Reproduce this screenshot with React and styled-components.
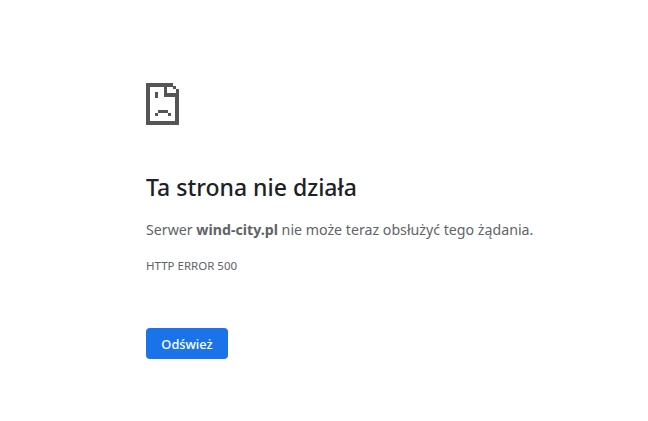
import React from "react";
import styled, { createGlobalStyle } from "styled-components";

const GlobalStyle = createGlobalStyle`
    html, body {
        margin: 0;
        padding: 0;
        background: #fff;
    }
`;

const Page = styled.div`
    width: 648px;
    height: 421px;
    overflow: hidden;
    box-sizing: border-box;
    padding: 83px 0 0 146px;
    display: flex;
    flex-direction: column;
    align-items: flex-start;
    font-family: "Noto Sans", "Liberation Sans", sans-serif;
    color: #5f6368;
`;

const Icon = styled.svg`
    display: block;
    width: 33px;
    height: 42px;
    shape-rendering: crispEdges;
`;

const Title = styled.h1`
    margin: 47px 0 0;
    font-size: 23px;
    line-height: 31px;
    font-weight: 500;
    color: #202124;
`;

const Message = styled.p`
    margin: 15px 0 0;
    font-size: 14.2px;
    line-height: 23px;
    strong {
        font-weight: 700;
    }
`;

const Code = styled.div`
    margin-top: 17px;
    font-size: 11.5px;
    line-height: 16px;
`;

const ReloadButton = styled.button`
    margin-top: 54px;
    width: 82px;
    height: 31px;
    padding: 0;
    border: 0;
    border-radius: 4px;
    background: #1a73e8;
    color: #fff;
    font-family: inherit;
    font-size: 12.8px;
    font-weight: 500;
`;

export default function App() {
    return (
        <>
            <GlobalStyle />
            <Page>
                <Icon viewBox="0 0 33 42" fill="#555555">
                    <path d="M0 0h27v4H4v34h25V10h4v32H0z" />
                    <path d="M18 4h3v6h12v4H18z" />
                    <path d="M27 3h3v3h-3zM30 6h3v4h-3z" />
                    <path d="M9 9h3v6H9z" />
                    <path d="M12 27h10v3H12zM9 30h3v3H9zM22 30h3v3h-3z" />
                </Icon>
                <Title>Ta strona nie działa</Title>
                <Message>
                    Serwer <strong>wind-city.pl</strong> nie może teraz obsłużyć tego żądania.
                </Message>
                <Code>HTTP ERROR 500</Code>
                <ReloadButton>Odśwież</ReloadButton>
            </Page>
        </>
    );
}
